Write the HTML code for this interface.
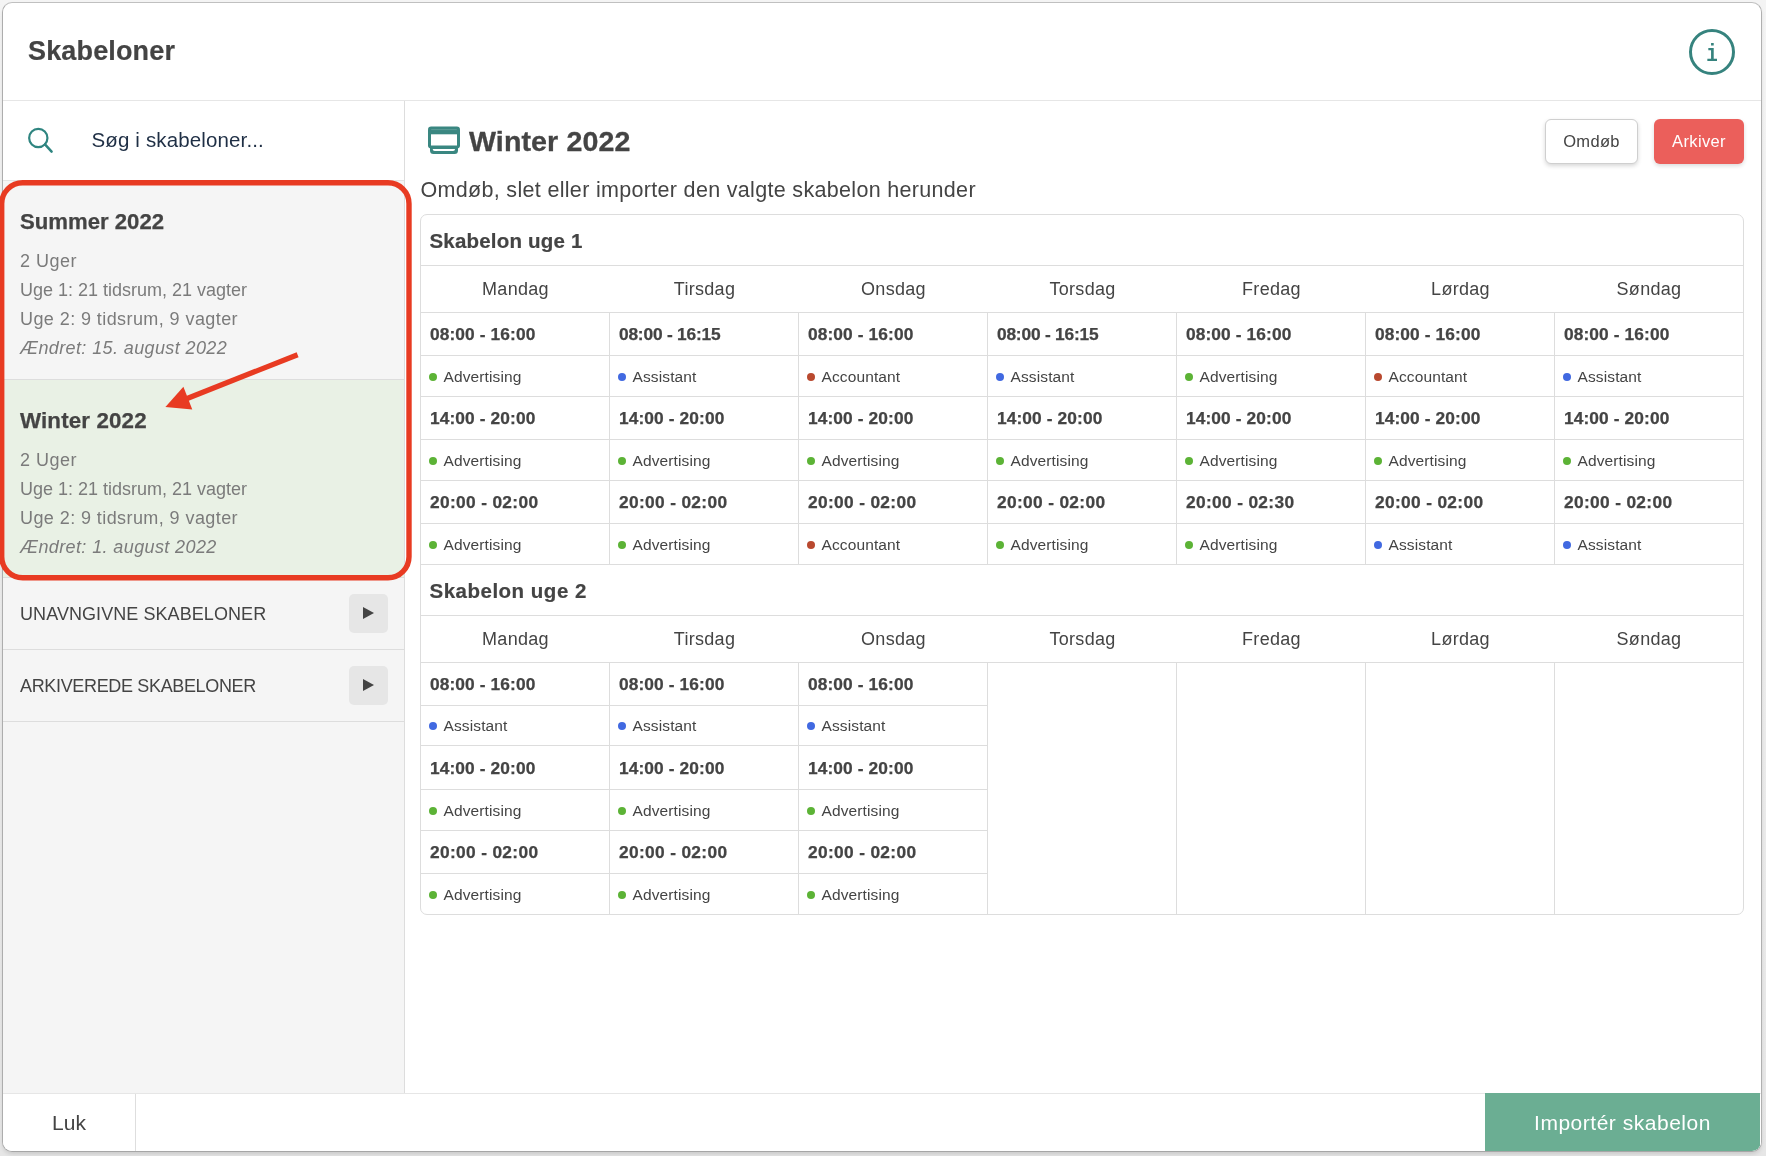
<!DOCTYPE html>
<html lang="da">
<head>
<meta charset="utf-8">
<title>Skabeloner</title>
<style>
*{box-sizing:border-box;margin:0;padding:0}
html,body{width:1766px;height:1156px;overflow:hidden}
body{background:#e8e8e8;font-family:"Liberation Sans",Arial,sans-serif;color:#444;position:relative}
.backdrop{position:absolute;left:0;top:0;width:1766px;height:1156px;background:linear-gradient(#f4f4f4,#e6e6e6)}
.modal{position:absolute;left:2px;top:2px;width:1760px;height:1150px;background:#fff;border:1px solid #adadad;border-color:#c0c0c0 #b0b0b0 #a6a6a6 #adadad;border-radius:10px;box-shadow:0 3px 4px -1px rgba(0,0,0,.13);overflow:hidden;will-change:transform}
/* header */
.mhead{position:absolute;left:0;top:0;width:1758px;height:98px;border-bottom:1px solid #e6e6e6}
.mhead h1{position:absolute;left:25px;top:32px;font-size:27px;line-height:32px;font-weight:bold;letter-spacing:.15px;color:#444;white-space:nowrap;-webkit-text-stroke:.2px #444}
.info{position:absolute;left:1685px;top:25px;width:48px;height:48px}
/* sidebar */
.side{position:absolute;left:0;top:98px;width:402px;height:992px;border-right:1px solid #ddd;background:#f5f5f5}
.search{position:relative;height:80px;background:#fff;border-bottom:1px solid #e4e4e4}
.search svg{position:absolute;left:22px;top:22px}
.search span{position:absolute;left:88.5px;top:26px;font-size:20.5px;line-height:26px;letter-spacing:.14px;color:#1f2f45;white-space:nowrap}
.item{position:relative;height:199px;border-bottom:1px solid #ddd;padding:27px 0 0 17px}
.item.sel{background:#e9f1e5;height:198px}
.item h3{font-size:21.5px;line-height:28px;font-weight:bold;color:#444;white-space:nowrap;transform-origin:0 50%;-webkit-text-stroke:.25px #444}
.item p{font-size:18px;line-height:29px;color:#7b7b7b;white-space:nowrap}
.item p.first{margin-top:11px}
.item p.it{font-style:italic}
.fold{position:relative;height:72px;border-bottom:1px solid #ddd}
.fold span{position:absolute;left:17px;top:25px;font-size:18px;line-height:22px;color:#444;white-space:nowrap}
.fold b{position:absolute;left:346px;top:16px;width:39px;height:39px;border-radius:5px;background:#e6e6e6}
.fold b:after{content:"";position:absolute;left:14px;top:13px;border-left:11.5px solid #444;border-top:6.5px solid transparent;border-bottom:6.5px solid transparent}
/* main */
.main{position:absolute;left:402px;top:98px;width:1356px;height:992px;background:#fff}
.main .ico{position:absolute;left:22px;top:24px}
.main h2{position:absolute;left:63.5px;top:25px;font-size:27.5px;line-height:32px;font-weight:bold;letter-spacing:.1px;white-space:nowrap;transform:scaleX(1.04);transform-origin:0 50%;-webkit-text-stroke:.3px #444}
.btn{position:absolute;top:18px;height:45px;border-radius:6px;font-size:16.5px;line-height:43px;text-align:center;white-space:nowrap}
.btn.ren{left:1140px;width:93px;border:1px solid #cfcfcf;background:#fff;color:#444;letter-spacing:.34px;box-shadow:0 2px 4px rgba(0,0,0,.16)}
.btn.arc{left:1249px;width:90px;background:#eb5f5b;color:#fff;line-height:45px;letter-spacing:.38px;box-shadow:0 2px 4px rgba(0,0,0,.14)}
.desc{position:absolute;left:15.5px;top:75px;font-size:21.5px;line-height:28px;letter-spacing:.32px;color:#444;white-space:nowrap}
.tbl{position:absolute;left:15px;top:113px;width:1324px;height:701px;border:1px solid #ddd;border-radius:7px;overflow:hidden}
.wk{height:51px;border-bottom:1px solid #ddd;padding:13px 0 0 8.5px;font-size:20.5px;line-height:26px;font-weight:bold;letter-spacing:.19px;white-space:nowrap;-webkit-text-stroke:.2px #444}
.wk.w2{border-top:1px solid #ddd;height:52px;margin-top:-1px}
.days{display:flex;height:47px;border-bottom:1px solid #ddd}
.days div{flex:0 0 189px;width:189px;text-align:center;font-size:18px;line-height:22px;padding-top:12px;letter-spacing:.3px}
.cols{display:flex;height:252px}
.col{flex:0 0 189px;width:189px;border-right:1px solid #ddd;height:252px}
.col:last-child{border-right:0;flex-basis:188px;width:188px}
.days div:last-child{flex-basis:188px;width:188px}
.t{height:43px;border-bottom:1px solid #ddd;padding:11px 0 0 8.5px;font-size:16.5px;line-height:20px;font-weight:bold;letter-spacing:.1px;white-space:nowrap}
.r{position:relative;height:41px;border-bottom:1px solid #ddd;padding:12px 0 0 22.5px;font-size:15.5px;line-height:18px;letter-spacing:.12px;white-space:nowrap}
.r:last-child{border-bottom:0}
.r.s{height:40px;padding-top:11px}.r.s i{top:16px}.t.l{height:44px;padding-top:12px}
.t span{display:inline-block;transform:scaleX(1.05);transform-origin:0 50%;-webkit-text-stroke:.25px #444}
.t.w{letter-spacing:.32px}.t.n{letter-spacing:-.19px}
.r i{position:absolute;left:8px;top:17px;width:8px;height:8px;border-radius:50%}
.g i{background:#5cb336}.b i{background:#4169e1}.a i{background:#b9492f}
/* footer */
.mfoot{position:absolute;left:0;top:1090px;width:1758px;height:58px;border-top:1px solid #e6e6e6;background:#fff}
.luk{position:absolute;left:0;top:0;width:133px;height:57px;border-right:1px solid #dedede;text-align:center;font-size:21px;line-height:57px;color:#444}
.imp{position:absolute;left:1482px;top:-1px;width:275px;height:59px;background:#6bae93;color:#fff;text-align:center;font-size:21px;line-height:59px;letter-spacing:.52px}
.anno{position:absolute;left:0;top:0;width:1766px;height:1156px;pointer-events:none}
</style>
</head>
<body>
<div class="backdrop"></div>
<div class="modal">
  <header class="mhead">
    <h1>Skabeloner</h1>
    <svg class="info" viewBox="0 0 48 48" width="48" height="48">
      <circle cx="24" cy="24" r="21.5" fill="none" stroke="#36837e" stroke-width="3"/>
      <text x="24" y="33.2" text-anchor="middle" transform="translate(24 0) scale(.8 1) translate(-24 0)" font-family="Liberation Mono, monospace" font-weight="bold" font-size="24" fill="#36837e">i</text>
    </svg>
  </header>

  <aside class="side">
    <div class="search">
      <svg width="36" height="36" viewBox="0 0 36 36"><circle cx="13.3" cy="15" r="9.15" fill="none" stroke="#2f8580" stroke-width="2.2"/><path d="M20 21.400L26.600 28.600" stroke="#2f8580" stroke-width="2.500" stroke-linecap="round"/></svg>
      <span>Søg i skabeloner...</span>
    </div>
    <div class="item">
      <h3 style="transform:scaleX(1.03);letter-spacing:0">Summer 2022</h3>
      <p class="first" style="letter-spacing:.5px">2 Uger</p>
      <p>Uge 1: 21 tidsrum, 21 vagter</p>
      <p style="letter-spacing:.42px">Uge 2: 9 tidsrum, 9 vagter</p>
      <p class="it" style="letter-spacing:.39px">Ændret: 15. august 2022</p>
    </div>
    <div class="item sel">
      <h3 style="transform:scaleX(1.04);letter-spacing:.12px">Winter 2022</h3>
      <p class="first" style="letter-spacing:.5px">2 Uger</p>
      <p>Uge 1: 21 tidsrum, 21 vagter</p>
      <p style="letter-spacing:.42px">Uge 2: 9 tidsrum, 9 vagter</p>
      <p class="it" style="letter-spacing:.39px">Ændret: 1. august 2022</p>
    </div>
    <div class="fold"><span style="letter-spacing:.07px">UNAVNGIVNE SKABELONER</span><b></b></div>
    <div class="fold"><span style="letter-spacing:-.34px">ARKIVEREDE SKABELONER</span><b></b></div>
  </aside>

  <section class="main">
    <svg class="ico" width="34" height="30" viewBox="0 0 34 30">
      <rect x="1" y="1.5" width="32" height="22" rx="3.2" fill="#3a8781"/>
      <path d="M3 20H31V25.5a3.5 3.5 0 0 1-3.5 3.5H6.500a3.5 3.5 0 0 1-3.5-3.500Z" fill="#3a8781"/>
      <rect x="4.200" y="4.300" width="25.600" height=".8" fill="#fff" fill-opacity=".22"/>
      <rect x="4" y="9.300" width="26" height="11.200" fill="#fff"/>
      <path d="M5.700 24H28a2 2 0 0 1-2 2H7.700a2 2 0 0 1-2-2Z" fill="#fff"/>
    </svg>
    <h2>Winter 2022</h2>
    <div class="btn ren">Omdøb</div>
    <div class="btn arc">Arkiver</div>
    <p class="desc">Omdøb, slet eller importer den valgte skabelon herunder</p>

    <div class="tbl">
      <div class="wk">Skabelon uge 1</div>
      <div class="days"><div>Mandag</div><div>Tirsdag</div><div>Onsdag</div><div>Torsdag</div><div>Fredag</div><div>Lørdag</div><div>Søndag</div></div>
      <div class="cols">
        <div class="col"><div class="t"><span>08:00 - 16:00</span></div><div class="r g"><i></i>Advertising</div><div class="t"><span>14:00 - 20:00</span></div><div class="r g"><i></i>Advertising</div><div class="t w"><span>20:00 - 02:00</span></div><div class="r g"><i></i>Advertising</div></div>
        <div class="col"><div class="t n"><span>08:00 - 16:15</span></div><div class="r b"><i></i>Assistant</div><div class="t"><span>14:00 - 20:00</span></div><div class="r g"><i></i>Advertising</div><div class="t w"><span>20:00 - 02:00</span></div><div class="r g"><i></i>Advertising</div></div>
        <div class="col"><div class="t"><span>08:00 - 16:00</span></div><div class="r a"><i></i>Accountant</div><div class="t"><span>14:00 - 20:00</span></div><div class="r g"><i></i>Advertising</div><div class="t w"><span>20:00 - 02:00</span></div><div class="r a"><i></i>Accountant</div></div>
        <div class="col"><div class="t n"><span>08:00 - 16:15</span></div><div class="r b"><i></i>Assistant</div><div class="t"><span>14:00 - 20:00</span></div><div class="r g"><i></i>Advertising</div><div class="t w"><span>20:00 - 02:00</span></div><div class="r g"><i></i>Advertising</div></div>
        <div class="col"><div class="t"><span>08:00 - 16:00</span></div><div class="r g"><i></i>Advertising</div><div class="t"><span>14:00 - 20:00</span></div><div class="r g"><i></i>Advertising</div><div class="t w"><span>20:00 - 02:30</span></div><div class="r g"><i></i>Advertising</div></div>
        <div class="col"><div class="t"><span>08:00 - 16:00</span></div><div class="r a"><i></i>Accountant</div><div class="t"><span>14:00 - 20:00</span></div><div class="r g"><i></i>Advertising</div><div class="t w"><span>20:00 - 02:00</span></div><div class="r b"><i></i>Assistant</div></div>
        <div class="col"><div class="t"><span>08:00 - 16:00</span></div><div class="r b"><i></i>Assistant</div><div class="t"><span>14:00 - 20:00</span></div><div class="r g"><i></i>Advertising</div><div class="t w"><span>20:00 - 02:00</span></div><div class="r b"><i></i>Assistant</div></div>
      </div>
      <div class="wk w2" style="letter-spacing:.5px">Skabelon uge 2</div>
      <div class="days"><div>Mandag</div><div>Tirsdag</div><div>Onsdag</div><div>Torsdag</div><div>Fredag</div><div>Lørdag</div><div>Søndag</div></div>
      <div class="cols">
        <div class="col"><div class="t"><span>08:00 - 16:00</span></div><div class="r b s"><i></i>Assistant</div><div class="t l"><span>14:00 - 20:00</span></div><div class="r g"><i></i>Advertising</div><div class="t w"><span>20:00 - 02:00</span></div><div class="r g"><i></i>Advertising</div></div>
        <div class="col"><div class="t"><span>08:00 - 16:00</span></div><div class="r b s"><i></i>Assistant</div><div class="t l"><span>14:00 - 20:00</span></div><div class="r g"><i></i>Advertising</div><div class="t w"><span>20:00 - 02:00</span></div><div class="r g"><i></i>Advertising</div></div>
        <div class="col"><div class="t"><span>08:00 - 16:00</span></div><div class="r b s"><i></i>Assistant</div><div class="t l"><span>14:00 - 20:00</span></div><div class="r g"><i></i>Advertising</div><div class="t w"><span>20:00 - 02:00</span></div><div class="r g"><i></i>Advertising</div></div>
        <div class="col"></div><div class="col"></div><div class="col"></div><div class="col"></div>
      </div>
    </div>
  </section>

  <footer class="mfoot">
    <div class="luk">Luk</div>
    <div class="imp">Importér skabelon</div>
  </footer>
</div>

<svg class="anno" viewBox="0 0 1766 1156" width="1766" height="1156">
  <rect x="1.7" y="182.8" width="407.3" height="394.9" rx="21" ry="21" fill="none" stroke="#e83b22" stroke-width="5.4"/>
  <path d="M297.6 354.7 L186.5 398.8" stroke="#e83b22" stroke-width="5.3" fill="none"/>
  <path d="M165.4 406.9 L183.4 386.7 L192.3 409.5 Z" fill="#e83b22"/>
</svg>
</body>
</html>
